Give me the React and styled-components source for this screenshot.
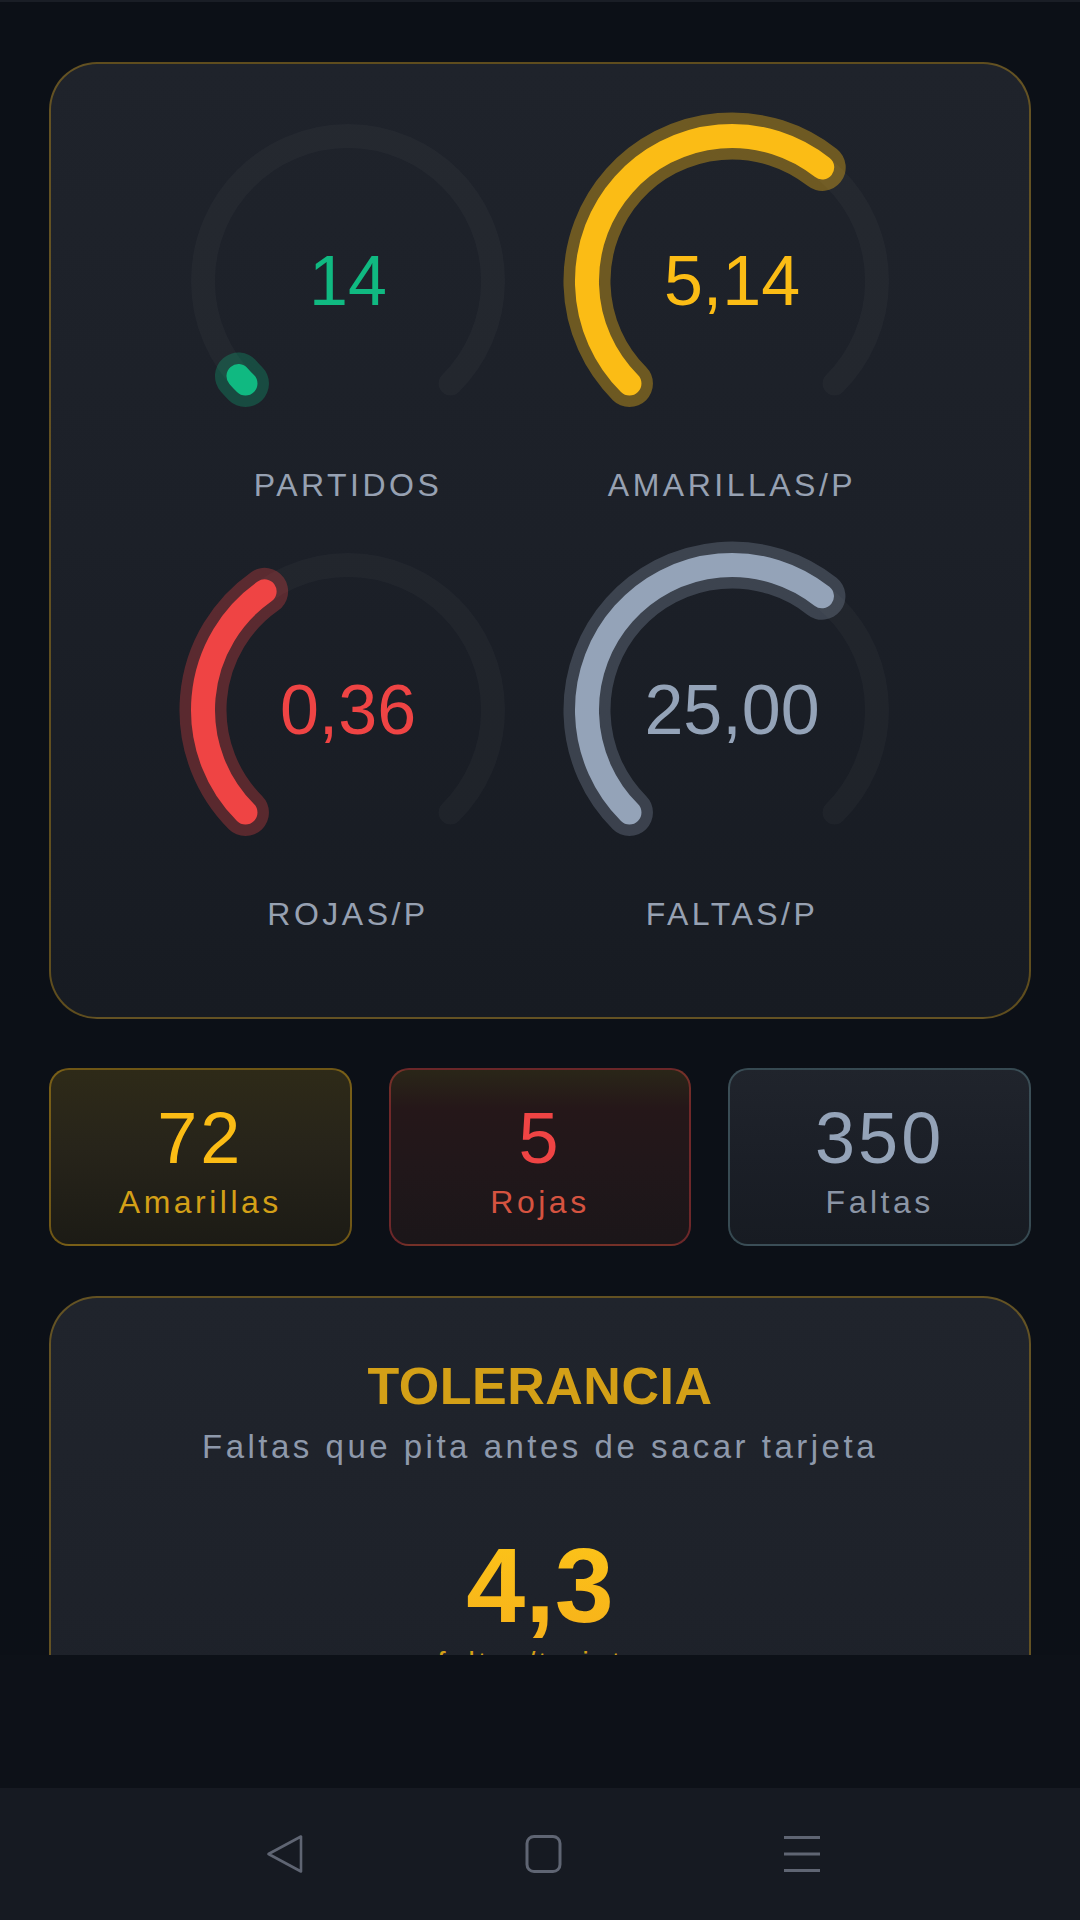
import React from 'react';
import styled, { createGlobalStyle } from 'styled-components';

const GlobalStyle = createGlobalStyle`
  html, body {
    margin: 0;
    padding: 0;
    background: #0d1117;
  }
  * {
    box-sizing: border-box;
  }
`;

const Screen = styled.div`
  width: 1080px;
  height: 1920px;
  display: flex;
  flex-direction: column;
  background: #0c1017;
  font-family: "Liberation Sans", Arial, sans-serif;
  overflow: hidden;
`;

const StatusStrip = styled.div`
  height: 2px;
  flex: none;
  background: #1a1e26;
`;

const Scroller = styled.div`
  height: 1653px;
  flex: none;
  overflow: hidden;
  padding: 60px 49px 0;
`;

const Filler = styled.div`
  flex: 1;
  background: #0d1118;
`;

const Panel = styled.section`
  border: 2px solid rgba(212, 160, 23, 0.38);
  border-radius: 48px;
  background: linear-gradient(180deg, #1f232b 0%, #1c2028 50%, #171b22 100%);
`;

const GaugePanel = styled(Panel)`
  padding: 47px 0 85px;
  display: grid;
  grid-template-columns: repeat(2, 340px);
  justify-content: center;
  column-gap: 44px;
  row-gap: 37px;
`;

const GaugeCell = styled.div`
  display: flex;
  flex-direction: column;
  align-items: center;
`;

const GaugeFace = styled.div`
  position: relative;
  width: 340px;
  height: 340px;
`;

const GaugeValue = styled.div`
  position: absolute;
  inset: 0;
  display: flex;
  align-items: center;
  justify-content: center;
  font-size: 70px;
  line-height: 1;
  color: ${p => p.$color};
`;

const GaugeLabel = styled.div`
  margin-top: 16px;
  line-height: 36px;
  font-size: 32px;
  letter-spacing: 3.5px;
  color: #97a1b2;
  text-transform: uppercase;
`;

const StatRow = styled.div`
  margin-top: 49px;
  display: grid;
  grid-template-columns: repeat(3, 1fr);
  gap: 37px;
`;

const tones = {
  yellow: {
    border: 'rgba(212, 160, 23, 0.45)',
    bg: 'linear-gradient(180deg, #2e2a18 0%, #27241a 45%, #1c1b15 100%)',
    num: '#fbbc15',
    label: '#d4a017',
  },
  red: {
    border: 'rgba(239, 68, 68, 0.38)',
    bg: 'linear-gradient(180deg, #2a2618 0%, #251719 22%, #21171a 55%, #1b1619 100%)',
    num: '#ef4444',
    label: '#d65340',
  },
  slate: {
    border: 'rgba(94, 130, 140, 0.45)',
    bg: 'linear-gradient(180deg, #20242c 0%, #1b1f27 50%, #171b22 100%)',
    num: '#94a3b8',
    label: '#8b95a5',
  },
};

const StatBox = styled.div`
  height: 178px;
  padding-top: 6px;
  border-radius: 20px;
  border: 2px solid ${p => tones[p.$tone].border};
  background: ${p => tones[p.$tone].bg};
  display: flex;
  flex-direction: column;
  align-items: center;
  justify-content: center;
  gap: 4px;
`;

const StatNumber = styled.div`
  font-size: 72px;
  line-height: 80px;
  letter-spacing: 3px;
  color: ${p => tones[p.$tone].num};
`;

const StatLabel = styled.div`
  font-size: 32px;
  line-height: 40px;
  letter-spacing: 3.5px;
  color: ${p => tones[p.$tone].label};
`;

const TolerancePanel = styled(Panel)`
  margin-top: 50px;
  padding: 58px 40px 60px;
  display: flex;
  flex-direction: column;
  align-items: center;
  background: linear-gradient(180deg, #20242c 0%, #1d2129 100%);
`;

const ToleranceTitle = styled.h2`
  margin: 0;
  font-size: 52px;
  line-height: 60px;
  font-weight: 700;
  letter-spacing: 0.5px;
  color: #d4a017;
`;

const ToleranceSub = styled.p`
  margin: 11px 0 0;
  font-size: 33px;
  line-height: 40px;
  letter-spacing: 3.5px;
  color: #8e99ab;
`;

const ToleranceValue = styled.div`
  margin-top: 65px;
  font-size: 106px;
  line-height: 106px;
  font-weight: 700;
  background: linear-gradient(180deg, #fcc419 0%, #f7b21a 100%);
  -webkit-background-clip: text;
  background-clip: text;
  color: transparent;
`;

const ToleranceUnit = styled.div`
  margin-top: 7px;
  font-size: 30px;
  line-height: 36px;
  letter-spacing: 3px;
  color: #d4a017;
`;

const NavBar = styled.nav`
  height: 132px;
  flex: none;
  padding-left: 8px;
  background: #161a22;
  display: grid;
  grid-template-columns: repeat(3, 258px);
  justify-content: center;
  align-items: center;
`;

const NavButton = styled.div`
  display: flex;
  justify-content: center;
  align-items: center;
  height: 60px;
`;

const polar = (cx, cy, r, deg) => {
  const a = (deg * Math.PI) / 180;
  return [cx + r * Math.cos(a), cy + r * Math.sin(a)];
};

const arcPath = (from, to) => {
  const [x1, y1] = polar(170, 170, 145, from);
  const [x2, y2] = polar(170, 170, 145, to);
  const large = to - from > 180 ? 1 : 0;
  return `M ${x1.toFixed(2)} ${y1.toFixed(2)} A 145 145 0 ${large} 1 ${x2.toFixed(2)} ${y2.toFixed(2)}`;
};

const Gauge = ({ value, label, pct, color, glow }) => {
  const end = 135 + 270 * pct;
  const valuePath = arcPath(135, end);
  return (
    <GaugeCell>
      <GaugeFace>
        <svg width="340" height="340" viewBox="0 0 340 340">
          <path d={arcPath(135, 405)} fill="none" stroke="rgba(255,255,255,0.027)" strokeWidth="24" strokeLinecap="round" />
          <path d={valuePath} fill="none" stroke={color} strokeOpacity={glow} strokeWidth="47" strokeLinecap="round" />
          <path d={valuePath} fill="none" stroke={color} strokeWidth="24" strokeLinecap="round" />
        </svg>
        <GaugeValue $color={color}>{value}</GaugeValue>
      </GaugeFace>
      <GaugeLabel>{label}</GaugeLabel>
    </GaugeCell>
  );
};

const gauges = [
  { value: '14', label: 'Partidos', pct: 0.015, color: '#10b981', glow: 0.28 },
  { value: '5,14', label: 'Amarillas/P', pct: 0.6425, color: '#fbbc15', glow: 0.36 },
  { value: '0,36', label: 'Rojas/P', pct: 0.37, color: '#ef4444', glow: 0.3 },
  { value: '25,00', label: 'Faltas/P', pct: 0.642, color: '#94a3b8', glow: 0.28 },
];

const stats = [
  { n: '72', label: 'Amarillas', tone: 'yellow' },
  { n: '5', label: 'Rojas', tone: 'red' },
  { n: '350', label: 'Faltas', tone: 'slate' },
];

export default function App() {
  return (
    <Screen>
      <GlobalStyle />
      <StatusStrip />
      <Scroller>
        <GaugePanel>
          {gauges.map(g => (
            <Gauge key={g.label} {...g} />
          ))}
        </GaugePanel>

        <StatRow>
          {stats.map(s => (
            <StatBox key={s.label} $tone={s.tone}>
              <StatNumber $tone={s.tone}>{s.n}</StatNumber>
              <StatLabel $tone={s.tone}>{s.label}</StatLabel>
            </StatBox>
          ))}
        </StatRow>

        <TolerancePanel>
          <ToleranceTitle>TOLERANCIA</ToleranceTitle>
          <ToleranceSub>Faltas que pita antes de sacar tarjeta</ToleranceSub>
          <ToleranceValue>4,3</ToleranceValue>
          <ToleranceUnit>faltas/tarjeta</ToleranceUnit>
        </TolerancePanel>
      </Scroller>
      <Filler />
      <NavBar>
        <NavButton>
          <svg width="40" height="40" viewBox="0 0 40 40">
            <path d="M35 2.5 L35 37.5 L2.5 20 Z" fill="none" stroke="#5f6573" strokeWidth="2.6" strokeLinejoin="round" />
          </svg>
        </NavButton>
        <NavButton>
          <svg width="40" height="40" viewBox="0 0 40 40">
            <rect x="3" y="2.5" width="33" height="35" rx="7" fill="none" stroke="#5f6573" strokeWidth="3" />
          </svg>
        </NavButton>
        <NavButton>
          <svg width="40" height="40" viewBox="0 0 40 40">
            <path d="M2 3.5 H38 M2 20 H38 M2 36.5 H38" fill="none" stroke="#5f6573" strokeWidth="3" />
          </svg>
        </NavButton>
      </NavBar>
    </Screen>
  );
}
